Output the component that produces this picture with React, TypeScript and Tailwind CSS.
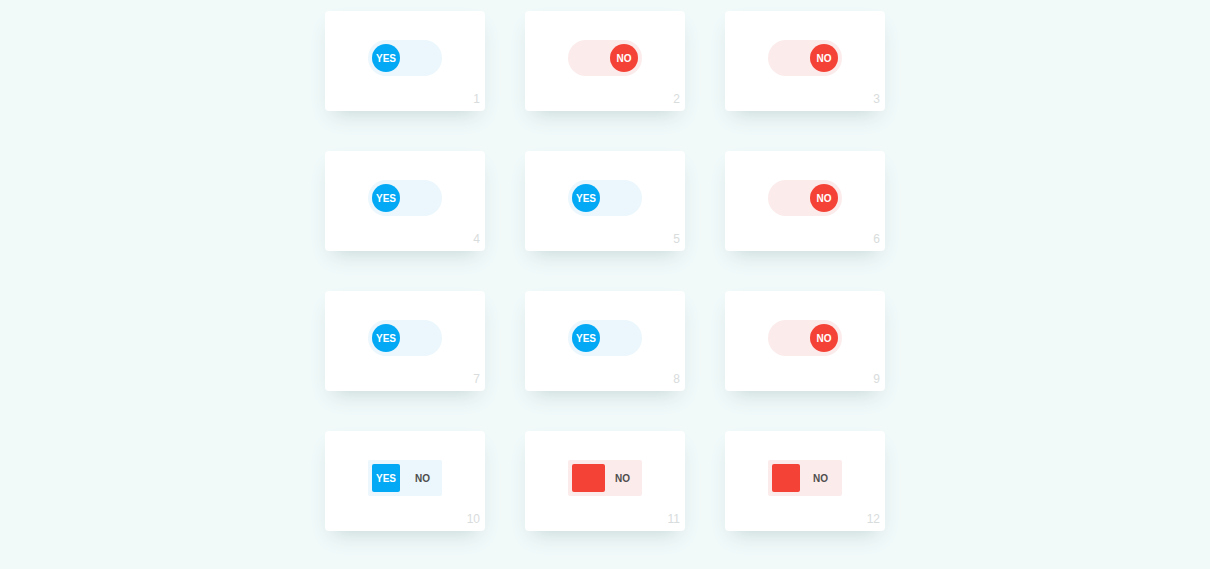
const font = { fontFamily: '"Liberation Sans", Arial, sans-serif' };

type Kind = "yes" | "no" | "rectYes" | "rectNo" | "rectNoWide";

const toggles: { n: number; kind: Kind }[] = [
  { n: 1, kind: "yes" },
  { n: 2, kind: "no" },
  { n: 3, kind: "no" },
  { n: 4, kind: "yes" },
  { n: 5, kind: "yes" },
  { n: 6, kind: "no" },
  { n: 7, kind: "yes" },
  { n: 8, kind: "yes" },
  { n: 9, kind: "no" },
  { n: 10, kind: "rectYes" },
  { n: 11, kind: "rectNoWide" },
  { n: 12, kind: "rectNo" },
];

const Toggle = ({ kind }: { kind: Kind }) => {
  if (kind === "yes") {
    return (
      <div className="w-[74px] h-[36px] p-[4px] rounded-full bg-[#ebf7fc] flex items-center justify-start">
        <div className="w-[28px] h-[28px] rounded-full bg-[#03a9f4] flex items-center justify-center text-[10px] font-bold text-white">
          YES
        </div>
      </div>
    );
  }
  if (kind === "no") {
    return (
      <div className="w-[74px] h-[36px] p-[4px] rounded-full bg-[#fcebeb] flex items-center justify-end">
        <div className="w-[28px] h-[28px] rounded-full bg-[#f44336] flex items-center justify-center text-[10px] font-bold text-white">
          NO
        </div>
      </div>
    );
  }
  if (kind === "rectYes") {
    return (
      <div className="w-[74px] h-[36px] p-[4px] rounded-[2px] bg-[#ebf7fc] flex items-center">
        <div className="w-[28px] h-[28px] rounded-[2px] bg-[#03a9f4] flex items-center justify-center text-[10px] font-bold text-white">
          YES
        </div>
        <span className="ml-[15px] text-[10px] font-bold text-[#4e4e4e]">NO</span>
      </div>
    );
  }
  const wide = kind === "rectNoWide";
  return (
    <div className="w-[74px] h-[36px] p-[4px] rounded-[2px] bg-[#fcebeb] flex items-center">
      <div
        className={`h-[28px] rounded-[2px] bg-[#f44336] ${wide ? "w-[33px]" : "w-[28px]"}`}
      />
      <span
        className={`text-[10px] font-bold text-[#4e4e4e] ${wide ? "ml-[10px]" : "ml-[13px]"}`}
      >
        NO
      </span>
    </div>
  );
};

export default function App() {
  return (
    <div className="min-h-[569px] bg-[#f1f9f9] pt-[11px] pb-8" style={font}>
      <div className="grid grid-cols-[160px_160px_160px] gap-x-10 gap-y-10 justify-center">
        {toggles.map((t) => (
          <div
            key={t.n}
            className="relative h-[100px] rounded-[4px] bg-white shadow-[0_10px_20px_-8px_#c5d6d6] flex items-center justify-center pb-[6px]"
          >
            <Toggle kind={t.kind} />
            <span className="absolute right-[5px] bottom-[5px] text-[12px] leading-[14px] text-[#d8dcdc]">
              {t.n}
            </span>
          </div>
        ))}
      </div>
    </div>
  );
}
